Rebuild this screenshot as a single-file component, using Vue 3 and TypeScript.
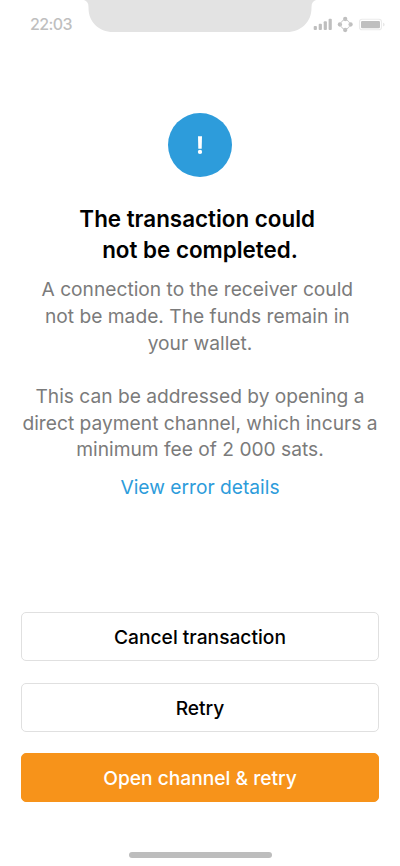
<script setup lang="ts">
const title: string[] = ['The transaction could\u00a0', 'not be completed.']
const reason: string[] = [
  'A connection to the receiver could\u00a0',
  'not be made. The funds remain in\u00a0',
  'your wallet.',
]
const advice: string[] = [
  'This can be addressed by opening a',
  'direct payment channel, which incurs a',
  'minimum fee of 2 000 sats.',
]
const actions: { label: string; primary: boolean }[] = [
  { label: 'Cancel transaction', primary: false },
  { label: 'Retry', primary: false },
  { label: 'Open channel & retry', primary: true },
]
</script>

<template>
  <div class="screen">
    <header class="status">
      <span class="time">22:03</span>
      <svg class="notch" viewBox="0 0 232 32" aria-hidden="true">
        <path d="M0 0H232C229 1 227.500 3 227.500 7V8C227.500 22 217 32 203 32H29C15 32 4.500 22 4.500 8V7C4.500 3 3 1 0 0Z" fill="#e3e3e3" />
      </svg>
      <svg class="indicators" viewBox="0 0 74 18" aria-hidden="true">
        <g fill="#bfbfbf">
          <rect x="1.700" y="11" width="3.200" height="4" rx="0.900" />
          <rect x="6.700" y="8.800" width="3.200" height="6.200" rx="0.900" />
          <rect x="11.700" y="6.300" width="3.200" height="8.700" rx="0.900" />
          <rect x="16.600" y="3.800" width="3.200" height="11.200" rx="0.900" />
          <circle cx="33.200" cy="4" r="2.150" />
          <circle cx="27.900" cy="9.500" r="2.150" />
          <circle cx="38.600" cy="9.500" r="2.150" />
          <circle cx="33.200" cy="15" r="2.150" />
          <rect x="49" y="5.900" width="19" height="7.300" rx="1.300" />
        </g>
        <circle cx="33.200" cy="9.500" r="4.600" fill="none" stroke="#c8c8c8" stroke-width="1" />
        <rect x="47.500" y="4.300" width="22" height="10.500" rx="2.600" fill="none" stroke="#ebebeb" stroke-width="1.100" />
        <path d="M71 7.700C73.200 8.400 73.200 10.700 71 11.400Z" fill="#e8e8e8" />
      </svg>
    </header>

    <main class="message">
      <div class="badge">
        <svg viewBox="0 0 64 64" aria-hidden="true">
          <circle cx="32" cy="32" r="32" fill="#2d9cdb" />
          <path d="M30 23.300H34L33.700 35.700H30.300Z" fill="#fff" />
          <circle cx="32" cy="38.900" r="2.150" fill="#fff" />
        </svg>
      </div>
      <h1 class="title"><span v-for="line in title" :key="line">{{ line }}</span></h1>
      <p class="copy"><span v-for="line in reason" :key="line">{{ line }}</span></p>
      <p class="copy advice"><span v-for="line in advice" :key="line">{{ line }}</span></p>
      <a class="details">View error details</a>
    </main>

    <footer class="actions">
      <button v-for="action in actions" :key="action.label" type="button" class="action" :class="{ primary: action.primary }">
        {{ action.label }}
      </button>
    </footer>
    <div class="home"></div>
  </div>
</template>

<style>
body {
  background: #fff;
}
</style>

<style scoped>
.screen {
  box-sizing: border-box;
  width: 400px;
  height: 866px;
  padding-bottom: 8.5px;
  display: flex;
  flex-direction: column;
  align-items: center;
  overflow: hidden;
  background: #fff;
  font-family: Inter, "Liberation Sans", sans-serif;
}
.status {
  width: 400px;
  height: 32px;
  display: grid;
  grid-template-columns: 84px 228px 88px;
}
.time {
  padding: 15px 0 0 30px;
  font-size: 16px;
  line-height: 19px;
  font-weight: 500;
  letter-spacing: -0.6px;
  color: #bfbfbf;
}
.notch {
  width: 232px;
  height: 32px;
}
.indicators {
  width: 74px;
  height: 18px;
  margin-top: 15px;
}
.message {
  padding-top: 81px;
  display: flex;
  flex-direction: column;
  align-items: center;
  text-align: center;
}
.badge,
.badge svg {
  display: block;
  width: 64px;
  height: 64px;
}
.title {
  margin: 26px 0 0;
  font-size: 22.4px;
  line-height: 31px;
  font-weight: 600;
  color: #000;
}
.title span,
.copy span {
  display: block;
  white-space: pre;
}
.copy {
  margin: 11.4px 0 0;
  font-size: 19.2px;
  line-height: 26.67px;
  color: #7b7b7b;
}
.copy.advice {
  margin-top: 26.67px;
}
.details {
  margin-top: 10.6px;
  font-size: 19.2px;
  line-height: 27px;
  color: #2d9cdb;
}
.actions {
  width: 357.4px;
  margin-top: auto;
  display: flex;
  flex-direction: column;
  gap: 21.5px;
}
.action {
  box-sizing: border-box;
  height: 49px;
  padding: 2px 0 0;
  border: 1px solid #e0e0e0;
  border-radius: 5px;
  background: #fff;
  font: 500 19.2px/27px Inter, "Liberation Sans", sans-serif;
  color: #000;
}
.action.primary {
  border-color: #f7931a;
  background: #f7931a;
  color: #fff;
}
.home {
  width: 143px;
  height: 5.5px;
  margin-top: 50px;
  border-radius: 3px;
  background: #bdbdbd;
}
</style>
